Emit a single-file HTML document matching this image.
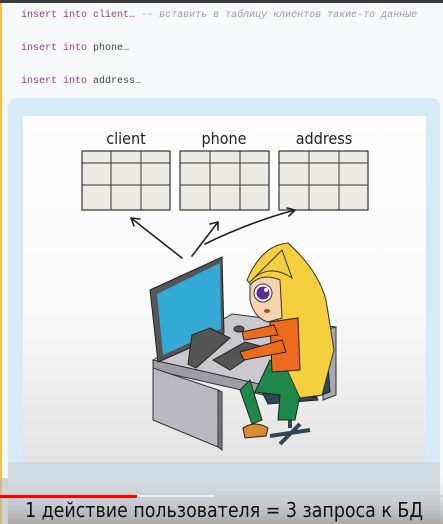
<!DOCTYPE html>
<html><head><meta charset="utf-8"><style>
html,body{margin:0;padding:0;width:443px;height:524px;overflow:hidden;background:#f8f9fb;font-family:"Liberation Sans",sans-serif}
.top{position:absolute;left:0;top:0;width:443px;height:3px;background:#3b3b3b}
.yl{position:absolute;left:0;top:3px;width:2px;height:521px;background:#f2c14a}
.code{position:absolute;left:21px;font:10px "Liberation Mono","DejaVu Sans Mono",monospace;color:#444;white-space:pre}
.k{color:#a0349b}.c{color:#9aa0a8;font-style:italic}
</style></head><body>
<div class="top"></div><div class="yl"></div>
<div class="code" style="top:10px"><span class="k">insert into</span> <span class="k">client…</span> <span class="c">-- вставить в таблицу клиентов такие-то данные</span></div>
<div class="code" style="top:43px"><span class="k">insert into</span> phone…</div>
<div class="code" style="top:76px"><span class="k">insert into</span> address…</div>
<svg style="position:absolute;left:0;top:0" width="443" height="524" viewBox="0 0 443 524">
<defs><linearGradient id="bg" x1="0" y1="0" x2="0" y2="1">
<stop offset="0" stop-color="#fff"/><stop offset="0.55" stop-color="#fafafa"/><stop offset="1" stop-color="#e3e3e3"/></linearGradient>
<linearGradient id="bt" x1="0" y1="0" x2="0" y2="1"><stop offset="0" stop-color="#cfd6dc" stop-opacity="0"/><stop offset="1" stop-color="#a9a9a9"/></linearGradient></defs>
<rect x="8" y="98" width="432" height="426" rx="8" fill="#d7eaf7"/>
<rect x="23" y="116" width="403" height="346" fill="url(#bg)"/>
<rect x="8" y="462" width="432" height="62" fill="#d3dbe2"/>
<rect x="8" y="478" width="435" height="46" fill="url(#bt)"/>
<rect x="0" y="478" width="8" height="46" fill="#b9b9b9" opacity=".6"/>
<g font-family="'DejaVu Sans Condensed','DejaVu Sans',sans-serif" font-size="16" fill="#222" text-anchor="middle">
<text x="126" y="144">client</text><text x="224" y="144">phone</text><text x="324" y="144">address</text></g>
<g stroke="#333" stroke-width="1.2" fill="#ede9e3">
<rect x="82" y="151" width="88" height="59"/><rect x="180" y="151" width="89" height="59"/><rect x="279" y="151" width="89" height="59"/>
</g>
<g stroke="#333" stroke-width="1">
<path d="M82 163H170M82 185H170M111 151V210M141 151V210"/>
<path d="M180 163H269M180 185H269M210 151V210M240 151V210"/>
<path d="M279 163H368M279 185H368M309 151V210M339 151V210"/>
</g>
<g stroke="#222" stroke-width="1.6" fill="none" stroke-linecap="round">
<path d="M182 258L131 218M131 218l9 1M131 218l3 8"/>
<path d="M192 256L218 222M218 222l-8 2M218 222l0 8"/>
<path d="M205 244Q250 222 295 210M295 210l-8-2M295 210l-6 6"/>
</g>
<polygon points="153,360 232,314 336,327 268,386" fill="#c9c8cf" stroke="#333"/>
<polygon points="153,360 268,386 268,396 153,370" fill="#9e9da6" stroke="#333"/>
<polygon points="153,368 218,390 218,447 153,420" fill="#bab9c1" stroke="#333"/>
<polygon points="218,390 222,392 222,450 218,447" fill="#77767e" stroke="#333"/>
<polygon points="323,330 336,327 336,395 323,400" fill="#a9a8b0" stroke="#333"/>
<polygon points="150,290 222,257 224,333 158,362" fill="#555" stroke="#222"/>
<polygon points="157,294 220,263 221,329 163,355" fill="#33a9d6"/>
<polygon points="192,335 210,328 230,338 196,368 188,364" fill="#555" stroke="#222"/>
<polygon points="213,360 245,342 264,347 230,370" fill="#555" stroke="#222"/>
<ellipse cx="239" cy="329" rx="5" ry="3" fill="#555" stroke="#222"/>
<path d="M262 392 L312 388 L318 400 L268 404Z" fill="#2e4656" stroke="#222"/>
<path d="M310 372 L328 366 L330 392 L312 398Z" fill="#2e4656" stroke="#222"/>
<path d="M290 402 V428 M270 436 L310 430 M280 444 L300 424" stroke="#2e4656" stroke-width="4"/>
<path d="M270 360 Q300 365 300 395 L295 420 L278 420 L280 395 L255 392 Z" fill="#1e8a4a" stroke="#222"/>
<path d="M250 380 L262 420 L252 424 L240 390Z" fill="#1e8a4a" stroke="#222"/>
<path d="M243 428 Q255 420 268 428 L266 436 L245 438Z" fill="#d88a36" stroke="#222"/>
<path d="M247 280 Q262 245 288 243 Q318 270 326 300 L334 350 L322 395 L300 398 L288 372 L278 320Z" fill="#f4cf3e" stroke="#333"/>
<path d="M270 322 L298 318 L300 370 L272 372Z" fill="#ee6b1e" stroke="#222"/>
<path d="M242 332 L274 325 L278 335 L244 340Z" fill="#ee6b1e" stroke="#222"/>
<path d="M240 352 L282 340 L286 352 L244 360Z" fill="#ee6b1e" stroke="#222"/>
<path d="M250 285 Q262 272 280 280 L282 318 L268 322 Q254 318 250 300Z" fill="#f3d3b0" stroke="#333"/>
<path d="M250 282 Q268 262 292 278 L282 250 Z" fill="#f4cf3e" stroke="#333"/>
<circle cx="263" cy="293" r="9" fill="#f6f0ff" stroke="#333"/>
<circle cx="263" cy="293" r="6.5" fill="#5a2d91"/>
<circle cx="266" cy="290" r="2" fill="#fff"/>
<ellipse cx="267" cy="311" rx="3" ry="2" fill="#b0463a"/>
<rect x="0" y="495" width="443" height="2" fill="#ccc" opacity=".6"/>
<rect x="137" y="495" width="77" height="2" fill="#eee"/>
<rect x="0" y="495" width="137" height="3" fill="#f00"/>
<text x="224" y="517" text-anchor="middle" font-family="'DejaVu Sans Condensed','DejaVu Sans',sans-serif" font-size="20" fill="#111" textLength="398" lengthAdjust="spacingAndGlyphs">1 действие пользователя = 3 запроса к БД</text>
</svg>
</body></html>
